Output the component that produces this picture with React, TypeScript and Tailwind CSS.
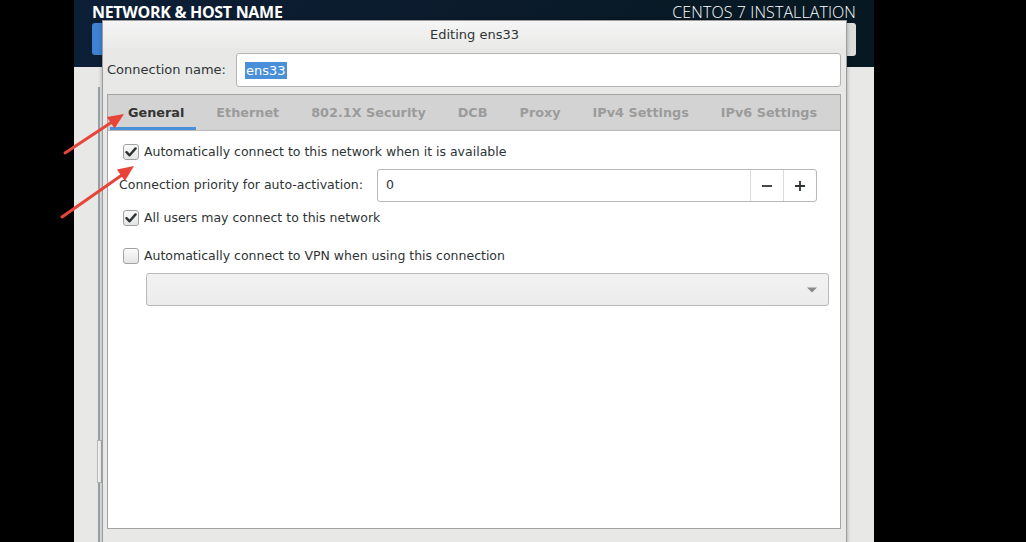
import React from "react";

const gtk = { fontFamily: '"DejaVu Sans", "Liberation Sans", sans-serif' };
const hdr = { fontFamily: '"Open Sans", "Liberation Sans", sans-serif' };

function Check({ checked }: { checked: boolean }) {
  return (
    <div className="w-[16px] h-[16px] rounded-[3px] border border-[#a1a1a1] bg-gradient-to-b from-[#fbfbfb] to-[#e4e4e4] flex items-center justify-center shrink-0">
      {checked && (
        <svg width="12" height="12" viewBox="0 0 12 12">
          <path d="M1.5 6.2 L4.6 9.3 L10.6 2.4" fill="none" stroke="#2e3436" strokeWidth="2.4" strokeLinecap="round" strokeLinejoin="round" />
        </svg>
      )}
    </div>
  );
}

const tabs = ["Ethernet", "802.1X Security", "DCB", "Proxy", "IPv4 Settings", "IPv6 Settings"];

export default function App() {
  return (
    <div className="relative w-[1026px] h-[542px] bg-black overflow-hidden flex" style={gtk}>
      <div className="w-[74px] shrink-0" />
      <div className="w-[800px] shrink-0 flex flex-col">
        <div className="h-[67px] bg-gradient-to-r from-[#0d1f36] via-[#0b1b2c] to-[#061821] relative flex flex-col px-[18px]">
          <div className="flex justify-between items-center h-[24px] text-white" style={hdr}>
            <span className="text-[16px] font-bold tracking-[-0.3px]">NETWORK &amp; HOST NAME</span>
            <span className="text-[16px] font-light tracking-[0.1px]">CENTOS 7 INSTALLATION</span>
          </div>
          <div className="flex justify-between mt-[-1px]">
            <div className="w-[60px] h-[32px] rounded-[3px] bg-[#3f82d4]" />
            <div className="w-[60px] h-[33px] rounded-[3px] bg-[#dcdcdc]" />
          </div>
        </div>
        <div className="flex-1 bg-[#e8e8e7] relative">
          <div className="absolute left-[24px] top-[20px] bottom-0 w-[2px] bg-[#9aa3ad]" />
          <div className="absolute left-[23px] top-[373px] w-[5px] h-[43px] bg-[#f4f4f4] border border-[#b8b8b8]" />
        </div>
      </div>

      {/* Dialog */}
      <div className="absolute left-[102px] top-[20px] w-[745px] h-[530px] border border-[#9c9c9c] bg-[#e8e8e7] flex flex-col shadow-[0_0_4px_rgba(0,0,0,0.3)]">
        <div className="h-[28px] bg-gradient-to-b from-[#f5f5f5] to-[#e9e9e8] flex items-center justify-center text-[13px] text-[#2e3436]">
          Editing ens33
        </div>
        <div className="flex items-center mt-[4px] pl-[4px] h-[34px]">
          <span className="w-[129px] text-[13px] text-[#2e3436]">Connection name:</span>
          <div className="w-[605px] h-[34px] bg-white border border-[#b4b4b4] rounded-[3px] flex items-center pl-[8px]">
            <span className="bg-[#4a90d9] text-white text-[13px] leading-[17px] px-[1px]">ens33</span>
          </div>
        </div>
        <div className="mt-[7px] ml-[4px] w-[734px] h-[435px] border border-[#a4a4a4] flex flex-col">
          <div className="h-[36px] bg-[#d3d3d3] flex items-stretch border-b border-[#b9b9b9] whitespace-nowrap text-[12.8px] font-bold">
            <div className="ml-[2px] pl-[18px] pr-[12px] flex items-center text-[#333] border-b-[3px] border-[#4a90d9] pt-[3px]">
              General
            </div>
            {tabs.map((t, i) => (
              <div
                key={t}
                className={
                  i === 0
                    ? "pl-[20px] pr-[16px] flex items-center text-[#9b9b9b] pt-[3px] border-b-[3px] border-transparent"
                    : "px-[16px] flex items-center text-[#9b9b9b] pt-[3px] border-b-[3px] border-transparent"
                }
              >
                {t}
              </div>
            ))}
          </div>
          <div className="flex-1 bg-white flex flex-col text-[12.5px] text-[#2e3436]">
            <div className="h-[20px] mt-[11px] pl-[15px] flex items-center gap-[5px]">
              <Check checked />
              <span>Automatically connect to this network when it is available</span>
            </div>
            <div className="h-[33px] mt-[7px] pl-[11px] flex items-center">
              <span className="w-[258px]">Connection priority for auto-activation:</span>
              <div className="w-[440px] h-[33px] border border-[#b8b8b8] rounded-[3px] flex">
                <div className="flex-1 flex items-center pl-[8px]">0</div>
                <div className="w-[33px] border-l border-[#dadada] flex items-center justify-center">
                  <svg width="12" height="12" viewBox="0 0 12 12"><path d="M1 6h10" stroke="#2e3436" strokeWidth="1.8" /></svg>
                </div>
                <div className="w-[33px] border-l border-[#dadada] flex items-center justify-center">
                  <svg width="12" height="12" viewBox="0 0 12 12"><path d="M1 6h10M6 1v10" stroke="#2e3436" strokeWidth="1.8" /></svg>
                </div>
              </div>
            </div>
            <div className="h-[20px] mt-[6px] pl-[15px] flex items-center gap-[5px]">
              <Check checked />
              <span>All users may connect to this network</span>
            </div>
            <div className="h-[20px] mt-[18px] pl-[15px] flex items-center gap-[5px]">
              <Check checked={false} />
              <span>Automatically connect to VPN when using this connection</span>
            </div>
            <div className="mt-[7px] ml-[38px] w-[683px] h-[33px] rounded-[3px] border border-[#b9b9b9] bg-gradient-to-b from-[#f2f2f2] to-[#ececec] flex items-center justify-end pr-[10px]">
              <svg width="12" height="8" viewBox="0 0 12 8"><path d="M1 1.5h10L6 6.5z" fill="#8a8a8a" /></svg>
            </div>
          </div>
        </div>
      </div>

      {/* Red arrows */}
      <svg className="absolute left-0 top-0 pointer-events-none" width="1026" height="542">
        <line x1="65" y1="153" x2="112" y2="122" stroke="#e8443a" strokeWidth="3" strokeLinecap="round" />
        <polygon points="124,114 114.6,128.6 106.8,117.0" fill="#e8443a" />
        <line x1="62" y1="217" x2="122" y2="175" stroke="#e8443a" strokeWidth="3" strokeLinecap="round" />
        <polygon points="134,166 124.9,180.9 116.9,169.5" fill="#e8443a" />
      </svg>
    </div>
  );
}
